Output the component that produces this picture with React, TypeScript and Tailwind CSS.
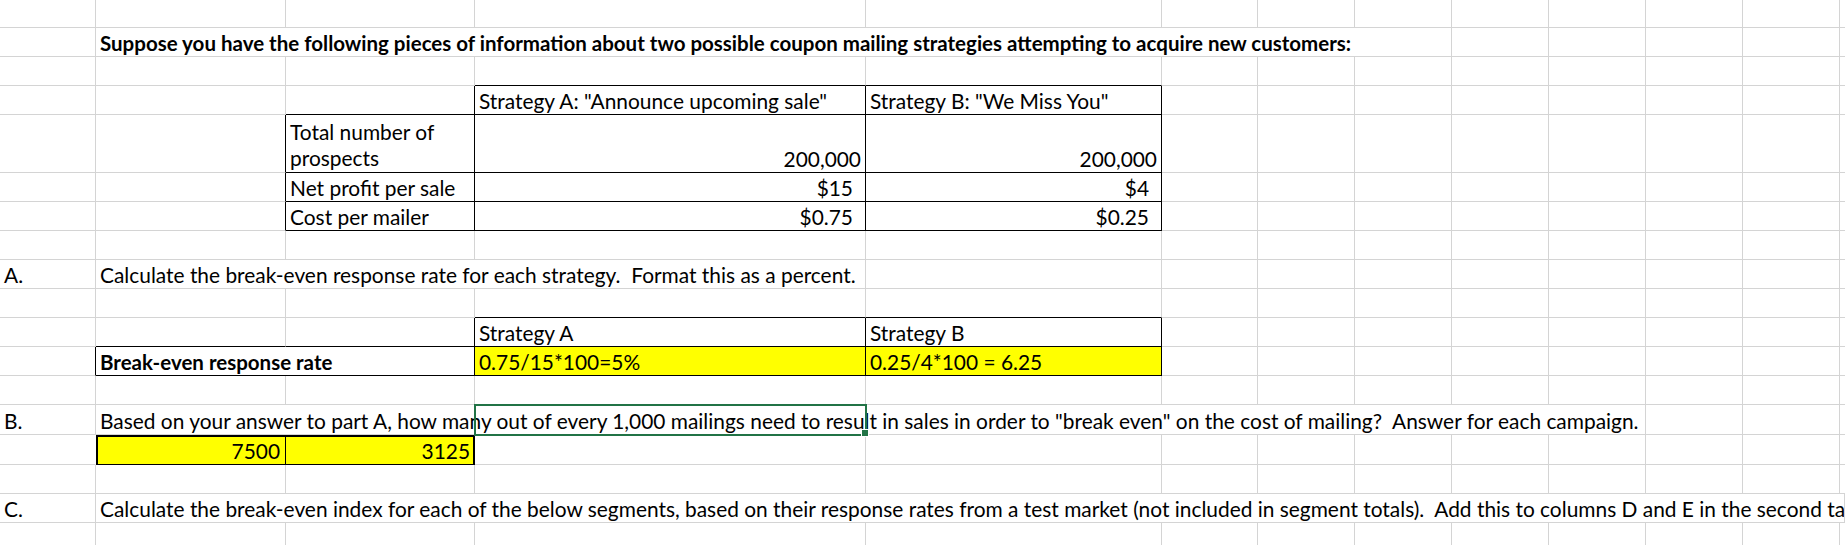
import React from "react";
import clsx from "clsx";

const COLS =
  "grid grid-cols-[96px_190px_189px_391px_296px_96px_97px_97px_97px_97px_97px_97px_1fr]";

type Edge = "g" | "k" | "n";

function Cell({
  r = "g",
  b = "g",
  className,
  children,
}: {
  r?: Edge;
  b?: Edge;
  className?: string;
  children?: React.ReactNode;
}) {
  return (
    <div
      className={clsx(
        "flex items-end border-r border-b px-[4px] pb-[1px] whitespace-nowrap overflow-hidden leading-[24px]",
        r === "k" ? "border-r-black" : r === "n" ? "border-r-transparent" : "border-r-[#d4d4d4]",
        b === "k" ? "border-b-black" : b === "n" ? "border-b-transparent" : "border-b-[#d4d4d4]",
        className
      )}
    >
      {children}
    </div>
  );
}

// empty cells filling the rest of a row
function Blank({ n }: { n: number }) {
  return (
    <>
      {Array.from({ length: n }).map((_, i) => (
        <Cell key={i} />
      ))}
    </>
  );
}

function Row({ h, children }: { h: string; children: React.ReactNode }) {
  return <div className={clsx(COLS, h)}>{children}</div>;
}

export default function App() {
  return (
    <div className="w-[1845px] h-[545px] overflow-hidden bg-white text-black font-['Lato','Liberation_Sans',sans-serif] text-[20.9px]">
      <Row h="h-[28px]">
        <Blank n={13} />
      </Row>

      <Row h="h-[29px]">
        <Cell />
        <Cell className="col-span-7 font-bold text-[20.5px]">
          Suppose you have the following pieces of information about two possible coupon mailing
          strategies attempting to acquire new customers:
        </Cell>
        <Blank n={5} />
      </Row>

      <Row h="h-[29px]">
        <Blank n={3} />
        <Cell b="k" />
        <Cell b="k" />
        <Blank n={8} />
      </Row>

      <Row h="h-[29px]">
        <Blank n={2} />
        <Cell r="k" b="k" />
        <Cell r="k" b="k">Strategy A: "Announce upcoming sale"</Cell>
        <Cell r="k" b="k">Strategy B: "We Miss You"</Cell>
        <Blank n={8} />
      </Row>

      <Row h="h-[58px]">
        <Cell />
        <Cell r="k" />
        <Cell r="k" b="k" className="flex-col items-start justify-end leading-[26px] pb-[0px]">
          <span>Total number of</span>
          <span>prospects</span>
        </Cell>
        <Cell r="k" b="k" className="justify-end">200,000</Cell>
        <Cell r="k" b="k" className="justify-end">200,000</Cell>
        <Blank n={8} />
      </Row>

      <Row h="h-[29px]">
        <Cell />
        <Cell r="k" />
        <Cell r="k" b="k">Net profit per sale</Cell>
        <Cell r="k" b="k" className="justify-end pr-[12px]">$15</Cell>
        <Cell r="k" b="k" className="justify-end pr-[12px]">$4</Cell>
        <Blank n={8} />
      </Row>

      <Row h="h-[29px]">
        <Cell />
        <Cell r="k" />
        <Cell r="k" b="k">Cost per mailer</Cell>
        <Cell r="k" b="k" className="justify-end pr-[12px]">$0.75</Cell>
        <Cell r="k" b="k" className="justify-end pr-[12px]">$0.25</Cell>
        <Blank n={8} />
      </Row>

      <Row h="h-[29px]">
        <Blank n={13} />
      </Row>

      <Row h="h-[29px]">
        <Cell>A.</Cell>
        <Cell className="col-span-3">
          Calculate the break-even response rate for each strategy.&nbsp; Format this as a percent.
        </Cell>
        <Blank n={9} />
      </Row>

      <Row h="h-[29px]">
        <Blank n={3} />
        <Cell b="k" />
        <Cell b="k" />
        <Blank n={8} />
      </Row>

      <Row h="h-[29px]">
        <Cell />
        <Cell b="k" />
        <Cell r="k" b="k" />
        <Cell r="k" b="k">Strategy A</Cell>
        <Cell r="k" b="k">Strategy B</Cell>
        <Blank n={8} />
      </Row>

      <Row h="h-[29px]">
        <Cell r="k" />
        <Cell r="k" b="k" className="col-span-2 font-bold text-[20.5px]">Break-even response rate</Cell>
        <Cell r="k" b="k" className="bg-[#ffff00]">0.75/15*100=5%</Cell>
        <Cell r="k" b="k" className="bg-[#ffff00]">0.25/4*100 = 6.25</Cell>
        <Blank n={8} />
      </Row>

      <Row h="h-[29px]">
        <Blank n={13} />
      </Row>

      <Row h="h-[30px]">
        <Cell className="col-start-1 row-start-1">B.</Cell>
        <Cell className="col-start-2 col-end-11 row-start-1">
          Based on your answer to part A, how many out of every 1,000 mailings need to result in
          sales in order to "break even" on the cost of mailing?&nbsp; Answer for each campaign.
        </Cell>
        {/* selected cell D14 */}
        <div className="col-start-4 row-start-1 relative pointer-events-none">
          <div className="absolute -inset-px border-2 border-[#217346]" />
          <div className="absolute -right-[2px] -bottom-[1px] size-[6px] bg-[#217346] outline outline-white" />
        </div>
        <Blank n={3} />
      </Row>

      <Row h="h-[30px]">
        <Cell r="n" />
        <Cell className="justify-end border-l-2 border-y-2 !border-l-black !border-y-black !border-r-black bg-[#ffff00] pr-[5px] pb-[0px]">
          7500
        </Cell>
        <Cell className="justify-end border-r-2 border-y-2 !border-r-black !border-y-black bg-[#ffff00] pr-[3px] pb-[0px]">
          3125
        </Cell>
        <Blank n={10} />
      </Row>

      <Row h="h-[29px]">
        <Blank n={13} />
      </Row>

      <Row h="h-[29px]">
        <Cell>C.</Cell>
        <Cell className="col-span-12">
          Calculate the break-even index for each of the below segments, based on their response
          rates from a test market (not included in segment totals).&nbsp; Add this to columns D
          and E in the second table.
        </Cell>
      </Row>

      <Row h="h-[23px]">
        <Blank n={13} />
      </Row>
    </div>
  );
}
